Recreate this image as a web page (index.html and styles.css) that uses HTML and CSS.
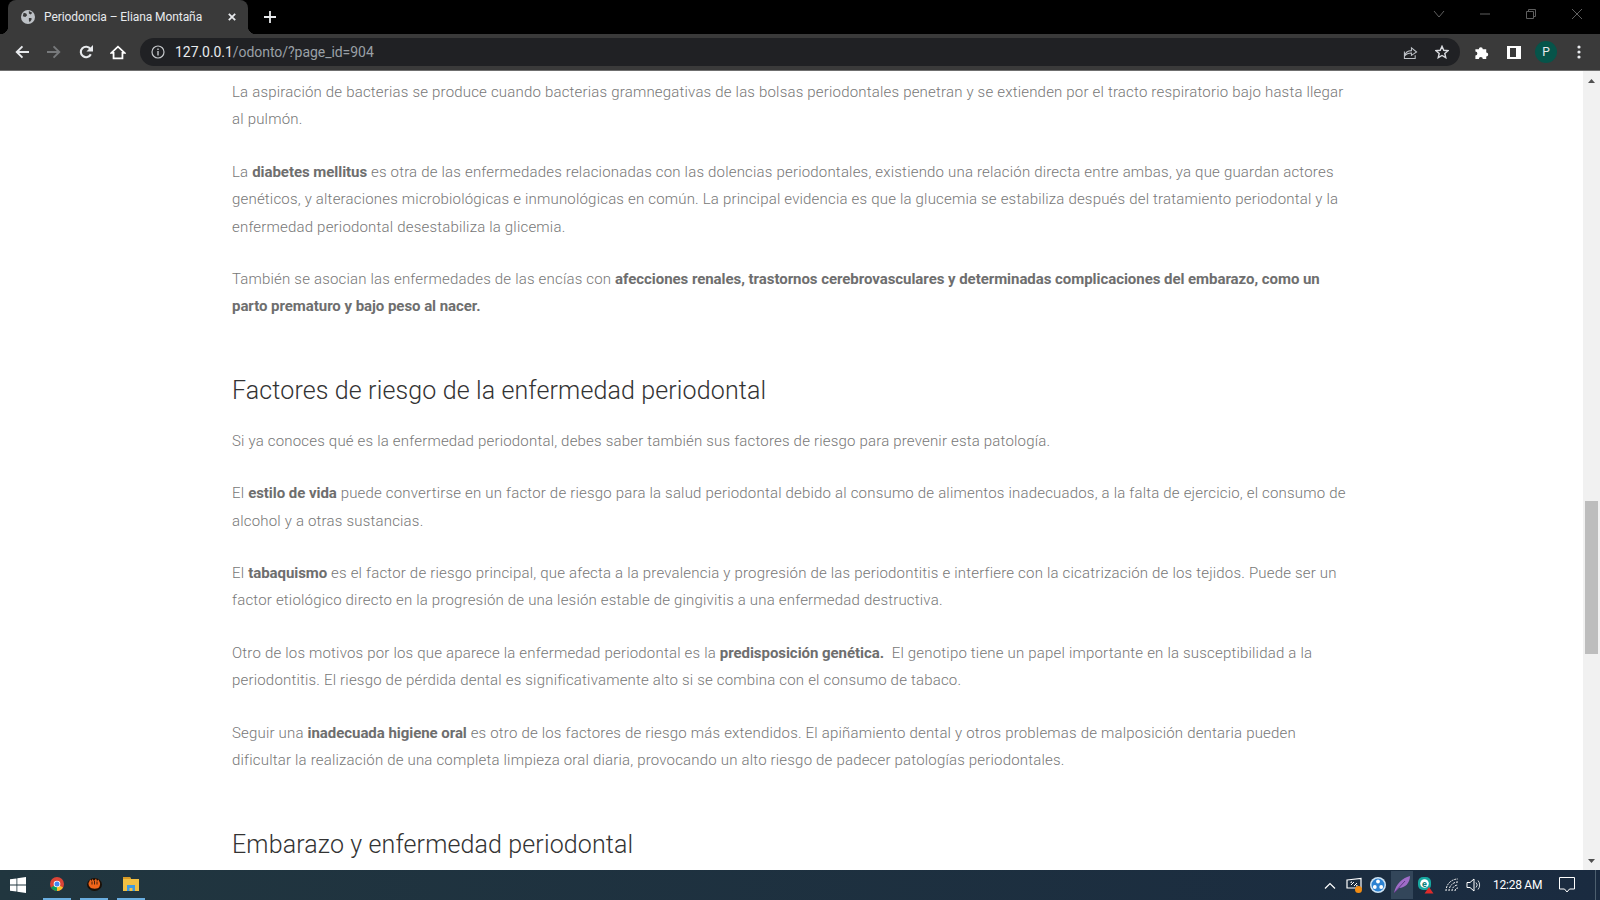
FILE: index.html
```html
<!DOCTYPE html>
<html lang="es">
<head>
  <meta charset="UTF-8">
  <title>Periodoncia – Eliana Montaña</title>
  <link rel="stylesheet" href="styles.css">
</head>
<body>
  <div class="tabstrip">
    <div class="tab">
      <svg class="favicon" width="14" height="14" viewBox="0 0 16 16"><circle cx="8" cy="8" r="8" fill="#bdc1c6"/><path d="M3 3l3 1 1 2-2 2-3-1zM9 9l3 0 0 2-2 3-1-2zM9 1l4 2-2 2-2-1z" fill="#3a3a3a"/></svg>
      <span class="tab-title">Periodoncia – Eliana Montaña</span>
      <svg class="tab-close" width="8" height="8" viewBox="0 0 10 10"><path d="M1 1l8 8M9 1l-8 8" stroke="#e8eaed" stroke-width="2.200"/></svg>
    </div>
    <svg class="newtab" width="12" height="12" viewBox="0 0 12 12"><path d="M6 0v12M0 6h12" stroke="#e8eaed" stroke-width="1.800"/></svg>
    <div class="winctrls">
      <svg width="12" height="12" viewBox="0 0 12 12"><path d="M1 3l5 6 5-6" fill="none" stroke="#5f5f5f"/></svg>
      <svg width="12" height="12" viewBox="0 0 12 12"><path d="M1 6h10" stroke="#5f5f5f"/></svg>
      <svg width="12" height="12" viewBox="0 0 12 12"><path d="M1.500 3.500h7v7h-7zM3.500 3.500v-2h7v7h-2" fill="none" stroke="#5f5f5f"/></svg>
      <svg width="12" height="12" viewBox="0 0 12 12"><path d="M1 1l10 10M11 1l-10 10" stroke="#5f5f5f"/></svg>
    </div>
  </div>

  <div class="toolbar">
    <svg class="tb-icon" width="14" height="14" viewBox="0 0 16 16"><path d="M16 8H2M8.500 1.500L2 8l6.500 6.500" fill="none" stroke="#e8eaed" stroke-width="2.200"/></svg>
    <svg class="tb-icon" width="14" height="14" viewBox="0 0 16 16"><path d="M0 8h14M7.500 1.500L14 8l-6.500 6.500" fill="none" stroke="#77797b" stroke-width="2.200"/></svg>
    <svg class="tb-icon tb-reload" width="14" height="14" viewBox="0 0 16 16"><path d="M13.500 10.500A6 6 0 1 1 13 4.500" fill="none" stroke="#e8eaed" stroke-width="2.400"/><path d="M16 0v7.500H8.500z" fill="#e8eaed"/></svg>
    <svg class="tb-home" width="16" height="15" viewBox="0 0 18 16"><path d="M9 1.500L1.500 8.500H4v6h10v-6h2.500z" fill="none" stroke="#fff" stroke-width="2"/></svg>
    <div class="omnibox">
      <svg width="14" height="14" viewBox="0 0 14 14"><circle cx="7" cy="7" r="6" fill="none" stroke="#c4c7ca" stroke-width="1.200"/><path d="M7 6v4.500M7 3.500v1.500" stroke="#c4c7ca" stroke-width="1.400"/></svg>
      <span class="url"><span class="url-host">127.0.0.1</span>/odonto/?page_id=904</span>
      <svg class="omni-share" width="15" height="15" viewBox="0 0 16 16"><path d="M1.500 7v7.500h11.500V11M1.500 12c1-4 4-6 7.500-6V3l5.500 4.500L9 11V8.500c-3 0-5.500 1-7.500 3.500z" fill="none" stroke="#bdc1c6" stroke-width="1.100"/></svg>
      <svg width="14" height="14" viewBox="0 0 16 16"><path d="M8 1.500l2 4.500 4.900.5-3.700 3.200 1.100 4.800L8 12l-4.300 2.500 1.100-4.800L1.100 6.500 6 6z" fill="none" stroke="#dadce0" stroke-width="1.600"/></svg>
    </div>
    <svg class="tb-puzzle" width="14" height="14" viewBox="1 .8 13.400 14.200"><path d="M1 5h3.500a2 2 0 1 1 4 0H12v3.500a2 2 0 1 1 0 4V15H8.500a2 2 0 1 0-4 0H1v-3.500a2 2 0 1 0 0-4z" fill="#fff"/></svg>
    <div class="tb-panel"></div>
    <div class="avatar">P</div>
    <svg class="tb-menu" width="4" height="14" viewBox="0 0 4 14"><circle cx="2" cy="2" r="1.600" fill="#e8eaed"/><circle cx="2" cy="7" r="1.600" fill="#e8eaed"/><circle cx="2" cy="12" r="1.600" fill="#e8eaed"/></svg>
  </div>

  <div class="viewport">
    <main class="content">
      <p>La aspiración de bacterias se produce cuando bacterias gramnegativas de las bolsas periodontales penetran y se extienden por el tracto respiratorio bajo hasta llegar al pulmón.</p>
      <p>La <strong>diabetes mellitus</strong> es otra de las enfermedades relacionadas con las dolencias periodontales, existiendo una relación directa entre ambas, ya que guardan actores genéticos, y alteraciones microbiológicas e inmunológicas en común. La principal evidencia es que la glucemia se estabiliza después del tratamiento periodontal y la enfermedad periodontal desestabiliza la glicemia.</p>
      <p>También se asocian las enfermedades de las encías con <strong>afecciones renales, trastornos cerebrovasculares y determinadas complicaciones del embarazo, como un parto prematuro y bajo peso al nacer.</strong></p>
      <h2>Factores de riesgo de la enfermedad periodontal</h2>
      <p>Si ya conoces qué es la enfermedad periodontal, debes saber también sus factores de riesgo para prevenir esta patología.</p>
      <p>El <strong>estilo de vida</strong> puede convertirse en un factor de riesgo para la salud periodontal debido al consumo de alimentos inadecuados, a la falta de ejercicio, el consumo de alcohol y a otras sustancias.</p>
      <p>El <strong>tabaquismo</strong> es el factor de riesgo principal, que afecta a la prevalencia y progresión de las periodontitis e interfiere con la cicatrización de los tejidos. Puede ser un factor etiológico directo en la progresión de una lesión estable de gingivitis a una enfermedad destructiva.</p>
      <p>Otro de los motivos por los que aparece la enfermedad periodontal es la <strong>predisposición genética.</strong>&nbsp; El genotipo tiene un papel importante en la susceptibilidad a la periodontitis. El riesgo de pérdida dental es significativamente alto si se combina con el consumo de tabaco.</p>
      <p>Seguir una <strong>inadecuada higiene oral</strong> es otro de los factores de riesgo más extendidos. El apiñamiento dental y otros problemas de malposición dentaria pueden dificultar la realización de una completa limpieza oral diaria, provocando un alto riesgo de padecer patologías periodontales.</p>
      <h2>Embarazo y enfermedad periodontal</h2>
    </main>
    <div class="scrollbar">
      <svg class="arrow" width="7" height="4" viewBox="0 0 7 4"><path d="M3.500 0L7 4H0z" fill="#505050"/></svg>
      <div class="track"><div class="thumb"></div></div>
      <svg class="arrow" width="7" height="4" viewBox="0 0 7 4"><path d="M0 0h7L3.500 4z" fill="#505050"/></svg>
    </div>
  </div>

  <footer class="taskbar">
    <svg class="start" width="16" height="16" viewBox="0 0 16 16"><path d="M0 2.300l6.500-.9v6.200H0zM7.300 1.300L16 0v7.600H7.300zM0 8.400h6.500v6.200L0 13.700zM7.300 8.400H16V16l-8.700-1.200z" fill="#fff"/></svg>
    <div class="task-app">
      <svg width="14" height="14" viewBox="0 0 14 14"><circle cx="7" cy="7" r="7" fill="#db4437"/><path d="M7 7L1 10.500A7 7 0 0 0 7 14z" fill="#0f9d58"/><path d="M7 7l6 3.500A7 7 0 0 1 7 14z" fill="#fbc02d"/><circle cx="7" cy="7" r="3.300" fill="#fff"/><circle cx="7" cy="7" r="2.500" fill="#4285f4"/></svg>
    </div>
    <div class="task-app">
      <svg width="15" height="14" viewBox="0 0 15 14"><ellipse cx="7.500" cy="7.500" rx="7.500" ry="6.500" fill="#1a1008"/><path d="M1.500 6c1-1 1-3 2-3.500l1 1.500 1-2 1.500 2L9 1.500 10 4l1.500-1.500C12.500 5 14 6 12.500 9.500c-1 3-8.500 3-10 0C1.500 8.500 1.500 7 1.500 6z" fill="#f0641a"/><path d="M5 4.500v3M7.500 4v3.500M10 4.500v3" stroke="#1a1008" stroke-width=".8"/></svg>
    </div>
    <div class="task-app">
      <svg width="16" height="14" viewBox="0 0 16 14"><path d="M0 0h7l1 2h8v12H0z" fill="#f2c043"/><path d="M0 0h7l1 2H0z" fill="#d89b26"/><path d="M4 8h8v6h-2.500v-3h-3v3H4z" fill="#3f9ae0"/></svg>
    </div>
    <div class="tray">
      <svg width="12" height="7" viewBox="0 0 12 7"><path d="M1 6.500l5-5 5 5" fill="none" stroke="#fff" stroke-width="1.200"/></svg>
      <svg class="tray-net" width="17" height="17" viewBox="0 0 17 17"><path d="M1 3l14-1.500V11H1z" fill="none" stroke="#fff" stroke-width="1.200"/><path d="M5 8l3-3M6 5H5v1M8 9l3-3M10 9h1V8" stroke="#fff" fill="none"/><circle cx="12.500" cy="12.500" r="3.500" fill="#f28c13"/></svg>
      <svg class="tray-blue" width="16" height="16" viewBox="0 0 16 16"><circle cx="8" cy="8" r="8" fill="#cfe4f4"/><circle cx="8" cy="8" r="6.500" fill="#2c82d2"/><circle cx="8" cy="4.500" r="1.900" fill="#fff"/><circle cx="4.800" cy="10" r="1.900" fill="#fff"/><circle cx="11.200" cy="10" r="1.900" fill="#fff"/></svg>
      <div class="tray-feather">
        <svg width="16" height="18" viewBox="0 0 16 18"><path d="M0 17C2 8 8 2 16 0c0 7-5 12-11 12z" fill="#a06cc8"/><path d="M0 17L11 5" stroke="#5b3a80"/></svg>
      </div>
      <svg class="tray-eset" width="16" height="17" viewBox="0 0 16 17"><rect x="0" y="0" width="13" height="13" rx="5" fill="#17a7a0"/><circle cx="6.500" cy="6.500" r="4.300" fill="#fff"/><text x="6.500" y="9.500" class="eset-letter">e</text><path d="M11 10l4.500 6.500h-9z" fill="#e02b2b"/></svg>
      <svg class="tray-wifi" width="14" height="14" viewBox="0 0 14 14"><path d="M1 13A12 12 0 0 1 13 1M4 13a9 9 0 0 1 9-9M7 13a6 6 0 0 1 6-6M10 13a3 3 0 0 1 3-3" fill="none" stroke="#fff" stroke-dasharray="2 1"/></svg>
      <svg class="tray-sound" width="16" height="14" viewBox="0 0 16 14"><path d="M1 4.500h3L8 1v12L4 9.500H1z" fill="none" stroke="#fff"/><path d="M10 4.500a3.500 3.500 0 0 1 0 5M12 2.500a7 7 0 0 1 0 9" fill="none" stroke="#cfd4d8"/></svg>
      <span class="clock">12:28 AM</span>
      <svg class="tray-notif" width="16" height="16" viewBox="0 0 16 16"><path d="M.5.500h15v11.500h-5L8 15 5.500 12h-5z" fill="none" stroke="#fff" stroke-width="1"/></svg>
      <span class="show-desktop"></span>
    </div>
  </footer>
</body>
</html>
```

FILE: styles.css
```css
* {
  box-sizing: border-box;
}

html, body {
  height: 100%;
  margin: 0;
  overflow: hidden;
}

body {
  display: flex;
  flex-direction: column;
  font-family: Roboto, sans-serif;
  background: #fff;
}

/* browser chrome */
.tabstrip {
  height: 34px;
  background: #000;
  display: flex;
  align-items: flex-end;
  flex-shrink: 0;
}

.tab {
  position: relative;
  width: 240px;
  height: 34px;
  margin-left: 8px;
  padding: 0 12px 0 13px;
  display: flex;
  align-items: center;
  background: #3a3a3a;
  border-radius: 8px 8px 0 0;
}

/* the flares at the foot of the active tab */
.tab::before,
.tab::after {
  content: "";
  position: absolute;
  bottom: 0;
  width: 8px;
  height: 8px;
}

.tab::before {
  left: -8px;
  background: radial-gradient(circle at 0 0, #000 8px, #3a3a3a 8.5px);
}

.tab::after {
  right: -8px;
  background: radial-gradient(circle at 100% 0, #000 8px, #3a3a3a 8.5px);
}

.tab-title {
  margin-left: 9px;
  flex: 1;
  color: #e8eaed;
  font-size: 12px;
  letter-spacing: -0.08px;
}

.newtab {
  margin: 0 0 11px 16px;
}

.winctrls {
  margin-left: auto;
  align-self: flex-start;
  padding: 8px 17px 0 0;
  display: flex;
  gap: 34px;
}

.toolbar {
  height: 37px;
  background: #3a3a3a;
  border-bottom: 1px solid #6f6f6f;
  display: flex;
  align-items: center;
  padding-left: 15px;
  flex-shrink: 0;
}

.tb-icon {
  margin-right: 18px;
}

.tb-reload {
  margin-right: 17px;
}

.omnibox {
  width: 1320px;
  height: 28px;
  margin-left: 14px;
  background: #202124;
  border-radius: 14px;
  display: flex;
  align-items: center;
  padding: 0 11px;
}

.url {
  margin-left: 10px;
  flex: 1;
  color: #9aa0a6;
  font-size: 14px;
  letter-spacing: -0.05px;
}

.url-host {
  color: #e8eaed;
}

.omni-share {
  margin-right: 17px;
}

.tb-puzzle {
  margin-left: 15px;
}

.tb-panel {
  width: 14px;
  height: 13px;
  margin-left: 18px;
  border: 2px solid #fff;
  border-left-width: 3px;
  border-right-width: 5px;
}

.avatar {
  width: 22px;
  height: 22px;
  margin-left: 14px;
  border-radius: 50%;
  background: #06544a;
  color: #e8eaed;
  font-size: 12px;
  line-height: 22px;
  text-align: center;
}

.tb-menu {
  margin-left: 20px;
}

/* page */
.viewport {
  flex: 1;
  min-height: 0;
  display: flex;
  overflow: hidden;
}

.content {
  flex: 1;
  padding: 8px 236px 0 232px;
  color: #777;
  font-size: 15px;
  font-weight: 300;
  line-height: 27.4px;
  letter-spacing: 0.19px;
}

.content p {
  margin: 0 0 25px;
}

.content strong {
  color: #6e6e6e;
  font-weight: 700;
  letter-spacing: -0.05px;
}

.content h2 {
  margin: 52px 0 19px;
  color: #333;
  font-size: 25px;
  font-weight: 300;
  line-height: 36px;
  letter-spacing: 0.13px;
}

.scrollbar {
  width: 17px;
  flex-shrink: 0;
  background: #f1f1f1;
  display: flex;
  flex-direction: column;
  align-items: center;
  padding: 8px 0 7px;
}

.track {
  flex: 1;
  width: 100%;
  padding-top: 418px;
}

.thumb {
  width: 13px;
  height: 153px;
  margin-left: 2px;
  background: #bdbdbd;
}

/* taskbar */
.taskbar {
  height: 30px;
  flex-shrink: 0;
  display: flex;
  align-items: center;
  background: linear-gradient(90deg, #21363f, #1a2b40);
}

.start {
  margin: 0 17px 0 10px;
}

.task-app {
  width: 28px;
  height: 30px;
  margin-right: 9px;
  display: flex;
  align-items: center;
  justify-content: center;
  border-bottom: 2px solid #6aaee0;
}

.tray {
  margin-left: auto;
  display: flex;
  align-items: center;
  height: 100%;
  color: #fff;
  font-size: 12px;
}

.tray svg {
  flex-shrink: 0;
}

.tray-net {
  margin-left: 10px;
}

.tray-blue {
  margin-left: 7px;
}

.tray-feather {
  width: 22px;
  height: 28px;
  margin-left: 5px;
  display: flex;
  align-items: center;
  justify-content: center;
  background: #33465a;
}

.tray-eset {
  margin-left: 5px;
}

.eset-letter {
  fill: #0c7f7a;
  font-size: 9px;
  font-weight: 700;
  text-anchor: middle;
}

.tray-wifi {
  margin-left: 11px;
}

.tray-sound {
  margin-left: 7px;
}

.clock {
  width: 48px;
  margin-left: 11px;
  white-space: nowrap;
  letter-spacing: -0.25px;
}

.tray-notif {
  margin-left: 18px;
}

.show-desktop {
  width: 1px;
  height: 100%;
  margin: 0 4px 0 20px;
  background: #4d5f6e;
}
```
